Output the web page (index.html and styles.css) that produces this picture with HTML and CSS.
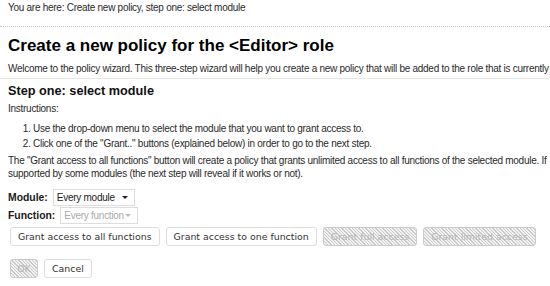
FILE: index.html
```html
<!DOCTYPE html>
<html>
<head>
<meta charset="utf-8">
<link rel="stylesheet" href="styles.css">
</head>
<body>
<div class="page">
  <div class="crumb">You are here: Create new policy, step one: select module</div>
  <h1 class="title">Create a new policy for the &lt;Editor&gt; role</h1>
  <p class="intro">Welcome to the policy wizard. This three-step wizard will help you create a new policy that will be added to the role that is currently being edited.</p>
  <h2 class="step">Step one: select module</h2>
  <p class="label">Instructions:</p>
  <ol class="steps">
    <li>Use the drop-down menu to select the module that you want to grant access to.</li>
    <li>Click one of the "Grant.." buttons (explained below) in order to go to the next step.</li>
  </ol>
  <p class="note">The "Grant access to all functions" button will create a policy that grants unlimited access to all functions of the selected module. If supported by some modules (the next step will reveal if it works or not).</p>
  <div class="field first">
    <span class="field-label">Module:</span>
    <span class="select module-select">Every module<span class="arrow"></span></span>
  </div>
  <div class="field">
    <span class="field-label">Function:</span>
    <span class="select func-select disabled">Every function<span class="arrow"></span></span>
  </div>
  <div class="buttons">
    <span class="btn">Grant access to all functions</span>
    <span class="btn">Grant access to one function</span>
    <span class="btn disabled">Grant full access</span>
    <span class="btn disabled">Grant limited access</span>
  </div>
  <div class="buttons actions">
    <span class="btn disabled ok">OK</span>
    <span class="btn">Cancel</span>
  </div>
</div>
</body>
</html>
```
FILE: styles.css
```css
html, body { margin: 0; padding: 0; background: #fff; }
body { overflow: hidden; font-family: "Liberation Sans", Arial, sans-serif; font-size: 10px; letter-spacing: -0.27px; color: #2a2a2a; }
.page { width: 550px; }
.crumb { padding: 1px 8px 11px; line-height: 14px; border-bottom: 1px dotted #c8c8c8; white-space: nowrap; }
.title { margin: 9px 8px 0; font-size: 17px; line-height: 20px; letter-spacing: 0; color: #000; font-weight: bold; white-space: nowrap; }
.intro { margin: 6px 0 0; padding: 0 0 2px 8px; white-space: nowrap; overflow: hidden; line-height: 14px; border-bottom: 1px solid #e8e8e2; }
.step { margin: 4px 8px 0; font-size: 12.7px; line-height: 16px; letter-spacing: 0; color: #111; }
.label { margin: 3px 8px 0; line-height: 14px; }
.steps { margin: 5px 8px 0; padding-left: 25px; line-height: 15px; }
.note { margin: 3px 0 0 8px; line-height: 13px; }
.field { margin: 1px 8px 0; display: flex; align-items: center; gap: 5px; height: 17px; }
.field.first { margin-top: 9px; }
.field-label { font-weight: bold; font-size: 10.4px; letter-spacing: 0; color: #1a1a1a; }
.select { position: relative; display: inline-block; box-sizing: border-box; height: 17px; line-height: 15px; border: 1px solid #ddd; padding: 0 16px 0 3px; font-size: 10px; color: #222; white-space: nowrap; }
.module-select { width: 82px; }
.func-select { width: 78px; }
.select .arrow { position: absolute; right: 6px; top: 6px; width: 0; height: 0; border-left: 3px solid transparent; border-right: 3px solid transparent; border-top: 3px solid #222; }
.select.disabled { color: #aaa; }
.select.disabled .arrow { border-top-color: #bbb; }
.buttons { display: flex; gap: 6px; margin: 3px 10px 0; }
.actions { margin-top: 13px; }
.btn { box-sizing: border-box; height: 19px; line-height: 17px; padding: 0 7px; border: 1px solid #ddd; border-radius: 3px; font-family: "DejaVu Sans", sans-serif; font-size: 9.4px; letter-spacing: 0; color: #333; background: #fff; white-space: nowrap; }
.btn.disabled { color: #b4b4b4; border-color: #ccc; background: repeating-linear-gradient(45deg, #cacaca 0, #cacaca 1px, #f2f2f2 1px, #f2f2f2 2.4px); }
.ok { width: 28px; padding: 0; text-align: center; }
```
